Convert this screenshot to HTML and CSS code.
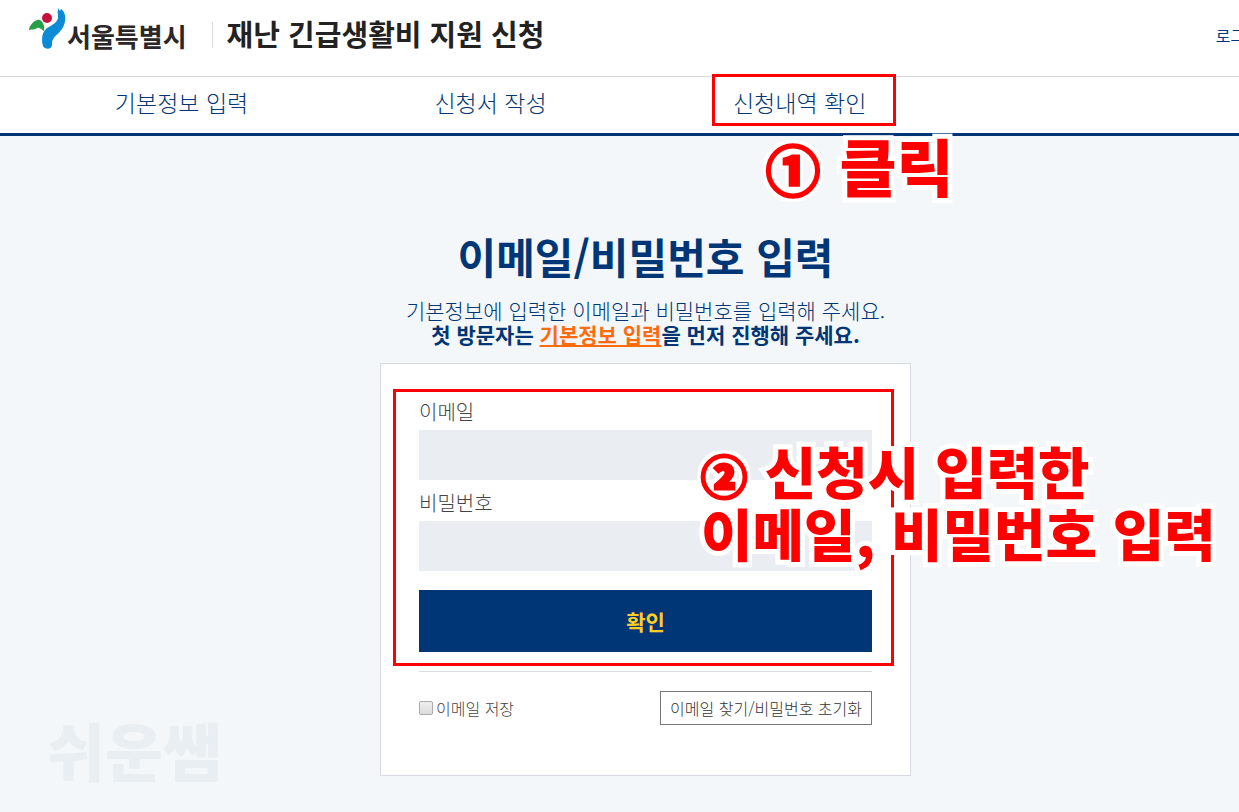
FILE: index.html
```html
<!DOCTYPE html>
<html lang="ko">
<head>
    <meta charset="UTF-8">
    <meta name="viewport" content="width=device-width, initial-scale=1.0">
    <title>재난 긴급생활비 지원 신청</title>
    <link rel="stylesheet" href="styles.css">
</head>
<body>
    <header class="header">
        <a class="logo" href="#">
            <svg class="logo-mark" viewBox="0 0 38 42" aria-hidden="true">
                <path fill="#24a148" d="M1 21C3 15 8 11 12 12C15 14 17 18 16 23C13 21 11 19 9 20C7 22 4 21 1 22Z"/>
                <circle cx="19" cy="10" r="5" fill="#c8103e"/>
                <path fill="#0a8bd6" d="M28 1L30 4L30 0L32 3L33 1C38 4 39 13 34 21C30 27 24 29 24 35C25 42 17 42 15 38C13 31 14 24 19 20C24 17 29 15 30 10C30 6 30 4 28 1Z"/>
            </svg>
            <span>서울특별시</span>
        </a>
        <h1 class="site-title">재난 긴급생활비 지원 신청</h1>
        <a class="login" href="#">로그인</a>
    </header>

    <nav class="nav">
        <a href="#">기본정보 입력</a>
        <a href="#">신청서 작성</a>
        <div class="nav-current">
            <a href="#">신청내역 확인</a>
            <p class="callout callout-click"><span class="num">①</span> 클릭</p>
        </div>
    </nav>

    <main class="main">
        <h2>이메일/비밀번호 입력</h2>
        <p class="intro">기본정보에 입력한 이메일과 비밀번호를 입력해 주세요.<br>
            <strong>첫 방문자는 <a href="#">기본정보 입력</a>을 먼저 진행해 주세요.</strong></p>

        <form class="card">
            <div class="fields">
                <label for="email">이메일</label>
                <input type="text" id="email">
                <label for="password">비밀번호</label>
                <input type="password" id="password">
                <button type="button" class="submit">확인</button>
                <p class="callout callout-input"><span class="num">②</span> 신청시 입력한<br>이메일, 비밀번호 입력</p>
            </div>
            <div class="options">
                <div class="save">
                    <input type="checkbox" id="save">
                    <label for="save">이메일 저장</label>
                </div>
                <button type="button" class="reset">이메일 찾기/비밀번호 초기화</button>
            </div>
        </form>
        <p class="watermark">쉬운쌤</p>
    </main>
</body>
</html>
```
FILE: styles.css
```css
*, *::before {
    box-sizing: border-box;
}
body {
    font-family: "Noto Sans CJK KR", sans-serif;
    font-weight: 300;
    margin: 0;
    color: #003675;
    background-color: #f3f7fa;
    overflow-x: hidden;
}
h1, h2, p {
    margin: 0;
}
a {
    color: inherit;
    text-decoration: none;
}
input, button {
    font: inherit;
    margin: 0;
}

/* header */
.header {
    display: flex;
    align-items: center;
    height: 77px;
    padding: 0 0 6px 28px;
    background-color: #fff;
    border-bottom: 1px solid #d7dae3;
    overflow: hidden;
    white-space: nowrap;
}
.logo {
    display: flex;
    align-items: center;
    gap: 1px;
    font-size: 26px;
    font-weight: 700;
    color: #2b2728;
}
.logo-mark {
    width: 38px;
    height: 42px;
    margin-bottom: 12px;
}
.site-title {
    margin-left: 25px;
    padding-left: 14px;
    border-left: 1px solid #d7dae3;
    font-size: 29px;
    font-weight: 700;
    line-height: 22px;
    padding-bottom: 4px;
    color: #222;
}
.login {
    margin-left: auto;
    margin-right: -21px;
    font-size: 16px;
    font-weight: 400;
}

/* step menu */
.nav {
    display: grid;
    grid-template-columns: repeat(3, 25.5%);
    height: 59px;
    padding-left: 27px;
    background-color: #fff;
    border-bottom: 3px solid #003675;
    font-size: 23px;
    line-height: 50px;
    text-align: center;
}
.nav-current {
    position: relative;
}
.nav-current::before {
    content: "";
    position: absolute;
    top: -3px;
    left: 50%;
    width: 184px;
    height: 52px;
    margin-left: -88px;
    border: 3px solid #f00;
    pointer-events: none;
}

/* red notes over the page */
.callout {
    position: absolute;
    z-index: 1;
    font-weight: 900;
    color: #f00;
    text-align: left;
    white-space: nowrap;
    -webkit-text-stroke: 10px #fff;
    paint-order: stroke fill;
    stroke-linejoin: round;
    pointer-events: none;
}
.callout .num {
    display: inline-block;
    margin-right: 2px;
    -webkit-text-stroke: 3px #f00;
    filter: drop-shadow(3px 0 0 #fff) drop-shadow(-3px 0 0 #fff) drop-shadow(0 3px 0 #fff) drop-shadow(0 -3px 0 #fff);
}
.callout-click {
    top: 48px;
    left: 121px;
    font-size: 62px;
    line-height: 80px;
}
.callout-click .num {
    font-size: 54px;
}
.callout-input {
    top: 52px;
    left: 282px;
    font-size: 56px;
    line-height: 58px;
}
.callout-input .num {
    font-size: 46px;
}

/* login form */
.main {
    position: relative;
    display: flex;
    flex-direction: column;
    align-items: center;
    padding: 90px 0 36px 52px;
}
h2 {
    font-size: 42px;
    font-weight: 700;
    line-height: 60px;
}
.intro {
    margin: 12px 0 17px;
    font-size: 21px;
    line-height: 24px;
    text-align: center;
}
.intro strong {
    font-weight: 700;
}
.intro a {
    color: #ff6b0b;
    text-decoration: underline;
}
.card {
    width: 531px;
    max-width: 100%;
    padding: 25px 38px 50px;
    background-color: #fff;
    border: 1px solid #d7dae0;
    color: #444;
}
.fields {
    position: relative;
    display: flex;
    flex-direction: column;
}
.fields::before {
    content: "";
    position: absolute;
    inset: 0 -22px -14px -26px;
    border: 3px solid #f00;
    pointer-events: none;
}
.fields label {
    padding-top: 5px;
    font-size: 20px;
    line-height: 36px;
}
.fields input {
    height: 50px;
    padding: 0 12px;
    background-color: #eaeef3;
    border: none;
}
.submit {
    height: 62px;
    margin-top: 19px;
    background-color: #003675;
    border: none;
    font-size: 21px;
    font-weight: 700;
    color: #ffcf24;
}
.options {
    display: flex;
    justify-content: space-between;
    align-items: center;
    margin-top: 19px;
    padding-top: 19px;
    border-top: 1px solid #d7dae0;
    font-size: 16px;
}
.save {
    display: flex;
    align-items: center;
    gap: 3px;
}
.save input {
    appearance: none;
    width: 14px;
    height: 14px;
    border: 1px solid #aaa;
    border-radius: 2px;
    background: linear-gradient(#eee, #dcdcdc);
}
.reset {
    height: 34px;
    padding: 0 9px;
    background-color: #fff;
    border: 1px solid #767676;
    line-height: 30px;
    color: #333;
    white-space: nowrap;
}
.watermark {
    position: absolute;
    left: 47px;
    bottom: 18px;
    font-size: 63px;
    font-weight: 900;
    line-height: 90px;
    color: #e9eef2;
}
```
